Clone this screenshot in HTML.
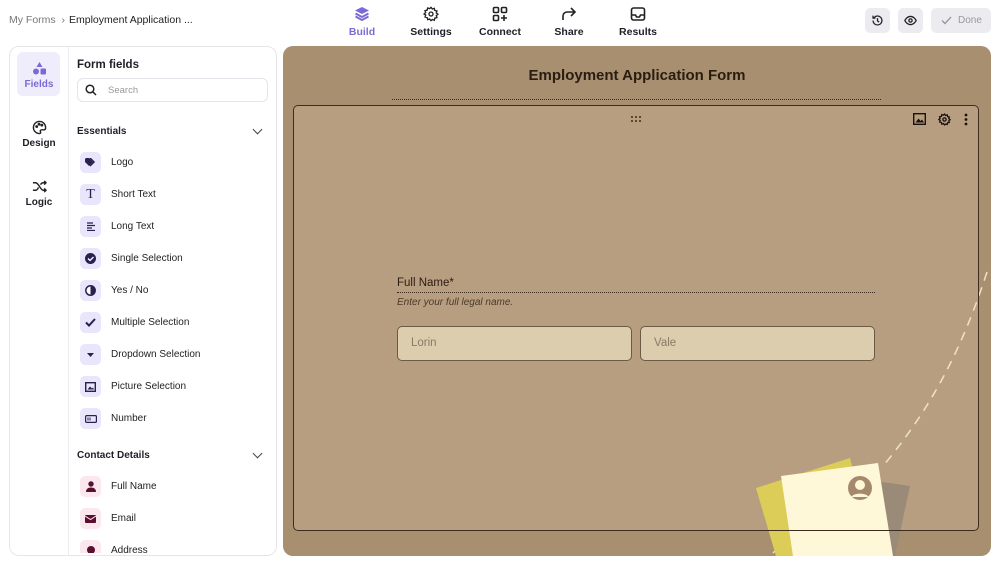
<!DOCTYPE html>
<html><head><meta charset="utf-8"><style>
*{box-sizing:border-box;margin:0;padding:0}
body{width:1000px;height:564px;overflow:hidden;background:#fff;font-family:"Liberation Sans",sans-serif;position:relative;color:#1f1f2a}
.abs{position:absolute}
.crumb{left:9px;top:14px;font-size:10.5px;color:#777}
.crumb b{font-weight:normal;color:#222;margin-left:4px}
.nav{top:6px;text-align:center;font-size:10.5px;font-weight:bold;width:60px}
.nav svg{display:block;margin:0 auto 4px}
.btn{top:8px;height:25px;border-radius:5px;background:#ececf0}
.side{left:9px;top:46px;width:268px;height:510px;border:1px solid #e6e6ea;border-radius:10px}
.tabs{left:68px;top:47px;width:1px;height:508px;background:#ececf0}
.tab{width:44px;text-align:center;font-size:10px;font-weight:bold;left:17px}
.item{left:80px;font-size:10px;color:#222}
.ic{position:absolute;left:0;width:21px;height:21px;border-radius:5px;background:#e9e5fb;display:flex;align-items:center;justify-content:center}
.item span{position:absolute;left:31px;top:5px;white-space:nowrap}
.red .ic{background:#fbe8ee}
.sec{left:77px;font-size:10px;font-weight:bold}
.chev{left:254px;width:7px;height:7px;border-right:1.4px solid #444;border-bottom:1.4px solid #444;transform:rotate(45deg)}
.canvas{left:283px;top:46px;width:708px;height:510px;background:#a88f6f;border-radius:10px;overflow:hidden}
.dm{font-family:"Liberation Sans",sans-serif}
</style></head><body>
<div class="abs crumb">My Forms &nbsp;›<b>Employment Application ...</b></div>

<div class="abs nav" style="left:332px;color:#7b6ad6"><svg width="16" height="16" viewBox="0 0 16 16"><path d="M8 1L15 4.5 8 8 1 4.5Z" fill="#7b6ad6"/><path d="M1.5 7.5L8 11l6.5-3.5M1.5 10.5L8 14l6.5-3.5" stroke="#7b6ad6" stroke-width="2" fill="none"/></svg>Build</div>
<div class="abs nav" style="left:401px"><svg width="16" height="16" viewBox="0 0 24 24" fill="none" stroke="#222" stroke-width="2"><circle cx="12" cy="12" r="3"/><path d="M12 2l2 2.5 3-1 .7 3.2 3.2.7-1 3 2.5 2-2.5 2 1 3-3.2.7-.7 3.2-3-1L12 22l-2-2.5-3 1-.7-3.2-3.2-.7 1-3L1.5 12 4 10l-1-3 3.2-.7L7 3l3 1z"/></svg>Settings</div>
<div class="abs nav" style="left:470px"><svg width="16" height="16" viewBox="0 0 16 16" fill="none" stroke="#222" stroke-width="1.6"><rect x="1.5" y="1.5" width="5" height="5" rx="1"/><rect x="9.5" y="1.5" width="5" height="5" rx="1"/><rect x="1.5" y="9.5" width="5" height="5" rx="1"/><path d="M12 9v6M9 12h6"/></svg>Connect</div>
<div class="abs nav" style="left:539px"><svg width="16" height="16" viewBox="0 0 16 16" fill="none" stroke="#222" stroke-width="1.6"><path d="M2 14V10a4 4 0 014-4h8M10 2l4 4-4 4"/></svg>Share</div>
<div class="abs nav" style="left:608px"><svg width="16" height="16" viewBox="0 0 16 16" fill="none" stroke="#222" stroke-width="1.6"><rect x="1.5" y="2" width="13" height="12" rx="2"/><path d="M1.5 9h4l1 2h3l1-2h4"/></svg>Results</div>

<div class="abs btn" style="left:865px;width:25px"><svg class="abs" style="left:6px;top:6px" width="13" height="13" viewBox="0 0 16 16" fill="none" stroke="#222" stroke-width="1.6"><path d="M2.5 8a5.5 5.5 0 105.5-5.5A5.5 5.5 0 003.5 5M2.5 2v3h3M8 5v3.5l2 1.5"/></svg></div>
<div class="abs btn" style="left:898px;width:25px"><svg class="abs" style="left:6px;top:7px" width="13" height="11" viewBox="0 0 16 12" fill="none" stroke="#222" stroke-width="1.6"><path d="M1 6s2.5-5 7-5 7 5 7 5-2.5 5-7 5-7-5-7-5z"/><circle cx="8" cy="6" r="2"/></svg></div>
<div class="abs btn" style="left:931px;width:60px;font-size:10px;color:#999;line-height:25px;padding-left:27px">Done<svg class="abs" style="left:10px;top:8px" width="11" height="9" viewBox="0 0 11 9" fill="none" stroke="#999" stroke-width="1.3"><path d="M1 4.5l3 3L10 1"/></svg></div>

<div class="abs side"></div>
<div class="abs tabs"></div>
<div class="abs" style="left:17px;top:52px;width:43px;height:44px;background:#efedfb;border-radius:6px"></div>
<div class="abs tab" style="top:61px;color:#7b6ad6"><svg width="15" height="15" viewBox="0 0 15 15" style="display:block;margin:0 auto 3px"><path d="M7.5 1l3 5h-6z" fill="#7b6ad6"/><circle cx="4" cy="10.5" r="3" fill="#7b6ad6"/><rect x="8.5" y="7.5" width="5.5" height="6" rx="1" fill="#7b6ad6"/></svg>Fields</div>
<div class="abs tab" style="top:120px"><svg width="15" height="15" viewBox="0 0 16 16" fill="none" stroke="#222" stroke-width="1.5" style="display:block;margin:0 auto 3px"><path d="M8 1.5a6.5 6.5 0 000 13c1.2 0 1.5-1 1-2s0-2 1.5-2H13a2 2 0 001.5-2A6.5 6.5 0 008 1.5z"/><circle cx="5" cy="7" r=".8"/><circle cx="7.5" cy="4.5" r=".8"/><circle cx="10.5" cy="5.5" r=".8"/></svg>Design</div>
<div class="abs tab" style="top:179px"><svg width="15" height="15" viewBox="0 0 16 16" fill="none" stroke="#222" stroke-width="1.5" style="display:block;margin:0 auto 3px"><path d="M1 4h3c3 0 5 8 8 8h3M1 12h3c1.5 0 2.5-2 3-3M9 6c.7-1 1.5-2 3-2h3M13 2l2 2-2 2M13 10l2 2-2 2"/></svg>Logic</div>

<div class="abs" style="left:77px;top:58px;font-size:11.5px;font-weight:bold;line-height:14px">Form fields</div>
<div class="abs" style="left:77px;top:78px;width:191px;height:24px;border:1px solid #e4e4ea;border-radius:6px;font-size:9.5px;color:#999;padding:6px 0 0 30px">Search<svg class="abs" style="left:7px;top:5px" width="12" height="12" viewBox="0 0 12 12" fill="none" stroke="#222" stroke-width="1.5"><circle cx="5" cy="5" r="3.8"/><path d="M8 8l3 3"/></svg></div>

<div class="abs sec" style="top:126px">Essentials</div><div class="abs chev" style="top:126px"></div>
<div class="abs item" style="top:152px"><div class="ic"><svg width="11" height="9" viewBox="0 0 11 9"><path d="M0 1v3l4 4 4-4-4-4H1z" fill="#2a2050"/><path d="M5 0l4 4-4 4" stroke="#2a2050" stroke-width="1.5" fill="none"/></svg></div><span>Logo</span></div>
<div class="abs item" style="top:184px"><div class="ic" style="font-family:'Liberation Serif',serif;font-size:14px;color:#2a2050">T</div><span>Short Text</span></div>
<div class="abs item" style="top:216px"><div class="ic"><svg width="10" height="9" viewBox="0 0 10 9" stroke="#2a2050" stroke-width="1.3"><path d="M1 1h6M1 3.5h8M1 6h5M1 8.5h8"/></svg></div><span>Long Text</span></div>
<div class="abs item" style="top:248px"><div class="ic"><svg width="11" height="11" viewBox="0 0 11 11"><circle cx="5.5" cy="5.5" r="5.5" fill="#2a2050"/><path d="M3 5.5l2 2 3.5-3.5" stroke="#fff" stroke-width="1.3" fill="none"/></svg></div><span>Single Selection</span></div>
<div class="abs item" style="top:280px"><div class="ic"><svg width="11" height="11" viewBox="0 0 11 11"><circle cx="5.5" cy="5.5" r="4.7" fill="#fff" stroke="#2a2050" stroke-width="1.5"/><path d="M5.5 5.5V1a4.5 4.5 0 010 9z" fill="#2a2050"/></svg></div><span>Yes / No</span></div>
<div class="abs item" style="top:312px"><div class="ic"><svg width="11" height="9" viewBox="0 0 11 9"><path d="M1 4.5l3 3L10 1" stroke="#2a2050" stroke-width="2" fill="none"/></svg></div><span>Multiple Selection</span></div>
<div class="abs item" style="top:344px"><div class="ic"><svg width="7" height="4" viewBox="0 0 7 4"><path d="M0 0h7L3.5 4z" fill="#2a2050"/></svg></div><span>Dropdown Selection</span></div>
<div class="abs item" style="top:376px"><div class="ic"><svg width="11" height="10" viewBox="0 0 11 10"><rect x=".7" y=".7" width="9.6" height="8.6" fill="none" stroke="#2a2050" stroke-width="1.4"/><path d="M2.5 7.5l2.5-3 2 2 1-1 1 2z" fill="#2a2050"/></svg></div><span>Picture Selection</span></div>
<div class="abs item" style="top:408px"><div class="ic"><svg width="12" height="8" viewBox="0 0 12 8"><rect x=".6" y=".6" width="10.8" height="6.8" rx="1" fill="none" stroke="#2a2050" stroke-width="1.2"/><path d="M3 2.5v3M5 2.5v3" stroke="#2a2050"/></svg></div><span>Number</span></div>

<div class="abs sec" style="top:450px">Contact Details</div><div class="abs chev" style="top:450px"></div>
<div class="abs item red" style="top:476px"><div class="ic"><svg width="10" height="11" viewBox="0 0 10 11" fill="#5a0f2e"><circle cx="5" cy="3" r="2.7"/><path d="M0 11c0-3 2-4.5 5-4.5s5 1.5 5 4.5z"/></svg></div><span>Full Name</span></div>
<div class="abs item red" style="top:508px"><div class="ic"><svg width="11" height="8" viewBox="0 0 11 8"><rect width="11" height="8" rx="1" fill="#5a0f2e"/><path d="M0 1l5.5 3.5L11 1" stroke="#fbe8ee" fill="none"/></svg></div><span>Email</span></div>
<div class="abs" style="left:78px;top:540px;width:190px;height:13px;overflow:hidden"><div class="abs item red" style="left:2px;top:0"><div class="ic"><svg width="10" height="11" viewBox="0 0 10 11"><circle cx="5" cy="5" r="4" fill="#5a0f2e"/></svg></div><span style="top:5px;font-size:10px">Address</span></div></div>

<div class="abs canvas">
  <div class="abs" style="left:10px;top:59px;width:686px;height:426px;background:#b89e80;border-radius:5px"></div>
  <div class="abs dm" style="left:0;width:708px;top:21px;text-align:center;font-size:15px;font-weight:bold;color:#2a1c12">Employment Application Form</div>
  <div class="abs" style="left:109px;top:53px;width:489px;border-top:1px dotted #3a2a1c"></div>
  <svg class="abs" style="left:0;top:0" width="708" height="510">
    <path d="M704 226 C680 300 650 360 600 420" stroke="#f0e2c8" stroke-width="1.5" stroke-dasharray="9 7" fill="none"/>
    <path d="M490 507 L500 497" stroke="#f0e2c8" stroke-width="1.5"/>
    <path d="M473 442 L567 412 L590 510 L493 510Z" fill="#dccd58"/>
    <path d="M545 428 L627 440 L612 510 L550 510Z" fill="#9a8b78"/>
    <path d="M498 430 L595 417 L610 510 L510 510Z" fill="#fef8d8"/>
    <circle cx="577" cy="442" r="12" fill="#a4896c"/>
    <circle cx="577" cy="439" r="5" fill="#fef8d8"/>
    <path d="M568 451a10 6 0 0118 0" fill="#fef8d8"/>
  </svg>
  <div class="abs" style="left:10px;top:59px;width:686px;height:426px;border:1px solid #3d2d1e;border-radius:5px"></div>
  <svg class="abs" style="left:347px;top:69px" width="12" height="8"><g fill="#3a2a1c"><circle cx="2" cy="2" r="1"/><circle cx="6" cy="2" r="1"/><circle cx="10" cy="2" r="1"/><circle cx="2" cy="6" r="1"/><circle cx="6" cy="6" r="1"/><circle cx="10" cy="6" r="1"/></g></svg>
  <svg class="abs" style="left:630px;top:67px" width="13" height="12" viewBox="0 0 13 12"><rect x=".7" y=".7" width="11.6" height="10.6" fill="none" stroke="#1a120c" stroke-width="1.4"/><path d="M2.5 9.5l3-4 2 2.5 1.5-1.5 2 3z" fill="#1a120c"/></svg>
  <svg class="abs" style="left:655px;top:67px" width="13" height="13" viewBox="0 0 24 24" fill="none" stroke="#1a120c" stroke-width="2.4"><circle cx="12" cy="12" r="3"/><path d="M12 2l2 2.5 3-1 .7 3.2 3.2.7-1 3 2.5 2-2.5 2 1 3-3.2.7-.7 3.2-3-1L12 22l-2-2.5-3 1-.7-3.2-3.2-.7 1-3L1.5 12 4 10l-1-3 3.2-.7L7 3l3 1z"/></svg>
  <svg class="abs" style="left:681px;top:67px" width="4" height="13"><g fill="#1a120c"><circle cx="2" cy="2" r="1.4"/><circle cx="2" cy="6.5" r="1.4"/><circle cx="2" cy="11" r="1.4"/></g></svg>
  <div class="abs dm" style="left:114px;top:231px;font-size:11.5px;color:#2a1c12">Full Name*</div>
  <div class="abs" style="left:114px;top:246px;width:478px;border-top:1px dotted #3a2a1c"></div>
  <div class="abs dm" style="left:114px;top:251px;font-size:10px;font-style:italic;color:#4a3a2a">Enter your full legal name.</div>
  <div class="abs dm" style="left:114px;top:280px;width:235px;height:35px;background:#dccdae;border:1px solid #6a5a46;border-radius:5px;font-size:11.5px;color:#8a7a66;padding:10px 0 0 13px">Lorin</div>
  <div class="abs dm" style="left:357px;top:280px;width:235px;height:35px;background:#dccdae;border:1px solid #6a5a46;border-radius:5px;font-size:11.5px;color:#8a7a66;padding:10px 0 0 13px">Vale</div>
</div>
</body></html>
